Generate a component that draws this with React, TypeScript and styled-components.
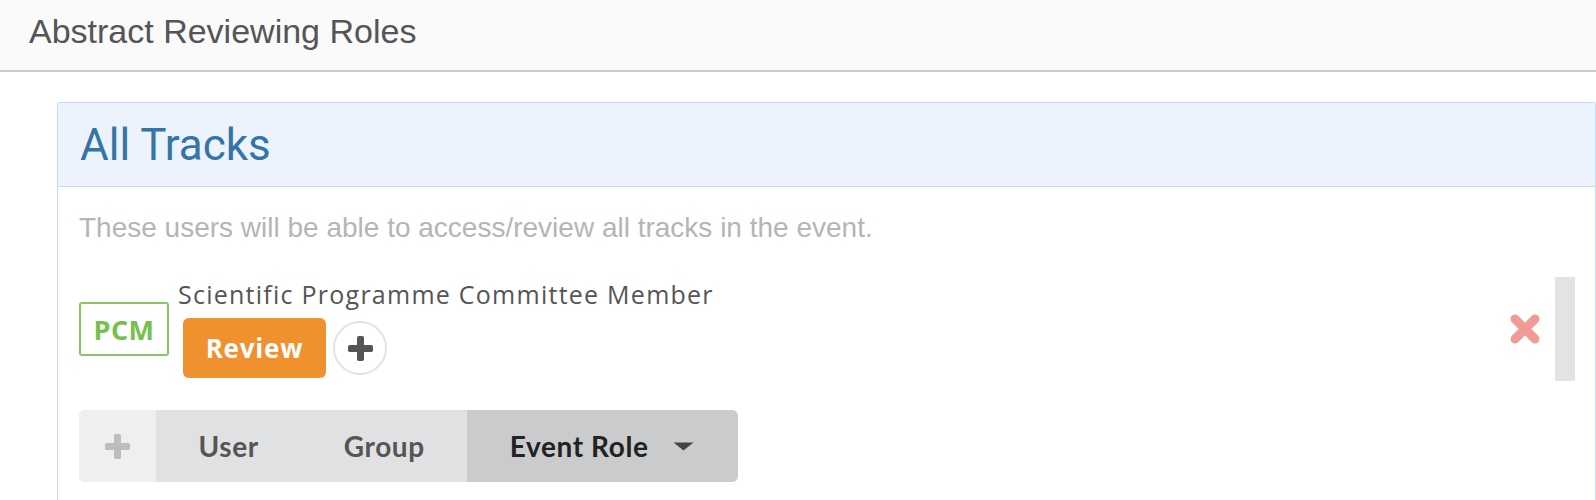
import React from "react";
import styled, { createGlobalStyle } from "styled-components";

const GlobalStyle = createGlobalStyle`
  html, body {
    margin: 0;
    padding: 0;
    background: #ffffff;
  }
  * { box-sizing: border-box; }
`;

const Page = styled.div`
  width: 1596px;
  font-family: "Liberation Sans", Arial, sans-serif;
`;

const Header = styled.header`
  height: 72px;
  padding: 14px 0 0 29px;
  background: #fafafa;
  border-bottom: 2px solid #cccccc;
`;

const HeaderTitle = styled.h1`
  margin: 0;
  font-family: "Liberation Sans", Arial, sans-serif;
  font-weight: 400;
  font-size: 34px;
  line-height: 34px;
  color: #555555;
`;

const Content = styled.main`
  padding: 30px 0 0 57px;
`;

const Panel = styled.section`
  border: 1px solid #c7daf5;
  border-radius: 2px;
  background: #ffffff;
`;

const PanelHeading = styled.div`
  padding: 21px 22px 20px;
  background: #edf3fd;
  border-bottom: 1px solid #c7daf5;
`;

const PanelTitle = styled.h2`
  margin: 0;
  font-family: Roboto, "Liberation Sans", sans-serif;
  font-weight: 400;
  font-size: 44px;
  line-height: 42px;
  color: #3474a6;
`;

const PanelBody = styled.div`
  padding: 27px 20px 30px 21px;
`;

const Description = styled.p`
  margin: 0;
  font-family: "Liberation Sans", Arial, sans-serif;
  font-size: 28px;
  line-height: 28px;
  color: #b5b5b5;
`;

const RoleList = styled.div`
  display: flex;
  margin-top: 35px;
  height: 104px;
`;

const RoleItem = styled.div`
  flex: 1;
  display: flex;
  align-items: center;
  padding-right: 15px;
`;

const RoleBadge = styled.div`
  width: 90px;
  height: 54px;
  margin-right: 9px;
  display: flex;
  align-items: center;
  justify-content: center;
  border: 2px solid #85c665;
  border-radius: 3px;
  font-family: "Open Sans", Lato, sans-serif;
  font-weight: 700;
  font-size: 27px;
  letter-spacing: 0.5px;
  color: #76c04f;
`;

const RoleInfo = styled.div`
  flex: 1;
  display: flex;
  flex-direction: column;
  gap: 9px;
`;

const RoleName = styled.div`
  font-family: "Open Sans", Lato, sans-serif;
  font-size: 25px;
  line-height: 29px;
  letter-spacing: 1.25px;
  color: #555555;
`;

const PermRow = styled.div`
  display: flex;
  align-items: center;
  gap: 7px;
  margin-left: 5px;
`;

const PermButton = styled.button`
  width: 143px;
  height: 60px;
  border: none;
  border-radius: 6px;
  background: #f0912f;
  color: #ffffff;
  font-family: "Open Sans", Lato, sans-serif;
  font-weight: 700;
  font-size: 26px;
  letter-spacing: 0.8px;
  padding: 0;
  cursor: pointer;
`;

const AddPermButton = styled.button`
  width: 54px;
  height: 54px;
  border-radius: 50%;
  border: 2px solid #e3e3e3;
  background: #ffffff;
  display: flex;
  align-items: center;
  justify-content: center;
  padding: 0;
  cursor: pointer;
`;

const RemoveButton = styled.button`
  width: 30px;
  height: 30px;
  border: none;
  background: none;
  padding: 0;
  display: flex;
  cursor: pointer;
`;

const ScrollThumb = styled.div`
  width: 20px;
  background: #e3e3e3;
`;

const Toolbar = styled.div`
  display: inline-flex;
  margin-top: 29px;
  height: 72px;
  border-radius: 6px;
  overflow: hidden;
  background: #e0e1e2;
`;

const ToolbarIcon = styled.div`
  width: 77px;
  display: flex;
  align-items: center;
  justify-content: center;
  background: #efefef;
`;

const ToolbarItem = styled.div<{ $active?: boolean }>`
  display: flex;
  align-items: center;
  gap: 24px;
  padding: 0 ${(p) => (p.$active ? "44px" : "42.5px")} 0 42.5px;
  background: ${(p) => (p.$active ? "#cacbcd" : "transparent")};
  color: ${(p) => (p.$active ? "#222222" : "#555555")};
  font-family: Lato, "Open Sans", sans-serif;
  font-weight: 700;
  font-size: 28px;
  letter-spacing: 0.6px;
  cursor: pointer;
`;

const Plus = ({ color, size = 25 }: { color: string; size?: number }) => (
  <svg width={size} height={size} viewBox="0 0 25 25">
    <rect x="9" y="0" width="7" height="25" rx="1.8" fill={color} />
    <rect x="0" y="9" width="25" height="7" rx="1.8" fill={color} />
  </svg>
);

export default function App() {
  return (
    <Page>
      <GlobalStyle />
      <Header>
        <HeaderTitle>Abstract Reviewing Roles</HeaderTitle>
      </Header>
      <Content>
        <Panel>
          <PanelHeading>
            <PanelTitle>All Tracks</PanelTitle>
          </PanelHeading>
          <PanelBody>
            <Description>These users will be able to access/review all tracks in the event.</Description>
            <RoleList>
              <RoleItem>
                <RoleBadge>PCM</RoleBadge>
                <RoleInfo>
                  <RoleName>Scientific Programme Committee Member</RoleName>
                  <PermRow>
                    <PermButton>Review</PermButton>
                    <AddPermButton>
                      <Plus color="#555555" />
                    </AddPermButton>
                  </PermRow>
                </RoleInfo>
                <RemoveButton>
                  <svg width="30" height="30" viewBox="0 0 30 30">
                    <path d="M5 5 L25 25 M25 5 L5 25" stroke="#f29b96" strokeWidth="9" strokeLinecap="round" fill="none" />
                  </svg>
                </RemoveButton>
              </RoleItem>
              <ScrollThumb />
            </RoleList>
            <Toolbar>
              <ToolbarIcon>
                <Plus color="#bdbdbd" />
              </ToolbarIcon>
              <ToolbarItem>User</ToolbarItem>
              <ToolbarItem>Group</ToolbarItem>
              <ToolbarItem $active>
                Event Role
                <svg width="21" height="9" viewBox="0 0 21 9">
                  <path d="M0.5 0.5 H20.5 L10.5 8.5 Z" fill="#444444" strokeLinejoin="round" />
                </svg>
              </ToolbarItem>
            </Toolbar>
          </PanelBody>
        </Panel>
      </Content>
    </Page>
  );
}
